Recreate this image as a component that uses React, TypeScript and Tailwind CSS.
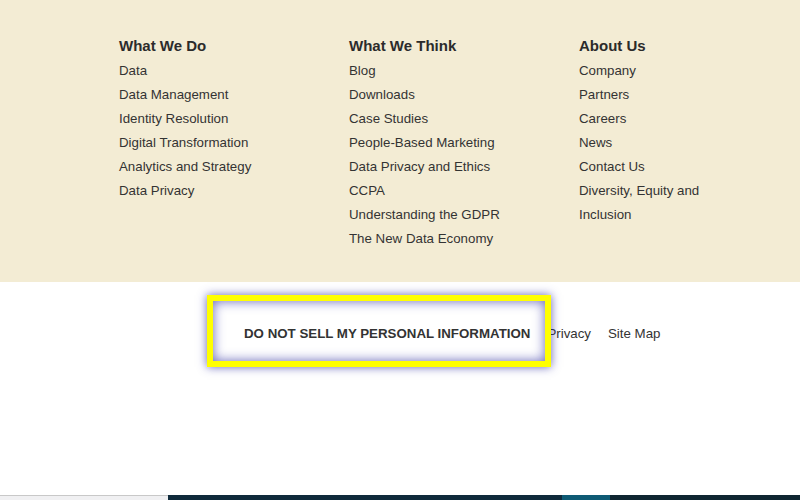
import React from "react";

const cols = [
  {
    title: "What We Do",
    w: "w-[200px]",
    items: ["Data", "Data Management", "Identity Resolution", "Digital Transformation", "Analytics and Strategy", "Data Privacy"],
  },
  {
    title: "What We Think",
    w: "w-[200px]",
    items: ["Blog", "Downloads", "Case Studies", "People-Based Marketing", "Data Privacy and Ethics", "CCPA", "Understanding the GDPR", "The New Data Economy"],
  },
  {
    title: "About Us",
    w: "w-[150px]",
    items: ["Company", "Partners", "Careers", "News", "Contact Us", "Diversity, Equity and Inclusion"],
  },
];

export default function App() {
  return (
    <div className="w-[800px] h-[500px] overflow-hidden bg-white text-[#333] flex flex-col" style={{ fontFamily: '"Liberation Sans", Arial, sans-serif' }}>
      <div className="h-[282px] shrink-0 bg-[#f3ecd4] pt-[34px] pl-[119px] flex">
        {cols.map((c) => (
          <div key={c.title} className="w-[230px] shrink-0">
            <div className="text-[15px] font-bold leading-[24px] text-[#2b2b2b]">{c.title}</div>
            <ul className={`${c.w} mt-px`}>
              {c.items.map((it) => (
                <li key={it} className="text-[13.3px] leading-[24px]">{it}</li>
              ))}
            </ul>
          </div>
        ))}
      </div>
      <div className="flex-1 relative">
        <div className="flex items-center gap-[17px] pl-[244px] pt-[43px] text-[13.3px] leading-[18px]">
          <span className="font-bold uppercase">DO NOT SELL MY PERSONAL INFORMATION</span>
          <span>Privacy</span>
          <span>Site Map</span>
        </div>
        <div className="absolute left-[207px] top-[13px] w-[344px] h-[72px] border-[6px] border-[#ffff00] shadow-[0_0_9px_rgba(50,50,160,0.75),inset_0_0_12px_rgba(50,50,160,0.75)]" />
      </div>
      <div className="h-[5px] shrink-0 flex">
        <div className="w-[168px] bg-[#f0f0f2] border-t border-[#c8c8c8]" />
        <div className="w-[394px] bg-[#0f2a3b]" />
        <div className="w-[48px] bg-[#0e5a74]" />
        <div className="flex-1 bg-[#0f2631]" />
      </div>
    </div>
  );
}
